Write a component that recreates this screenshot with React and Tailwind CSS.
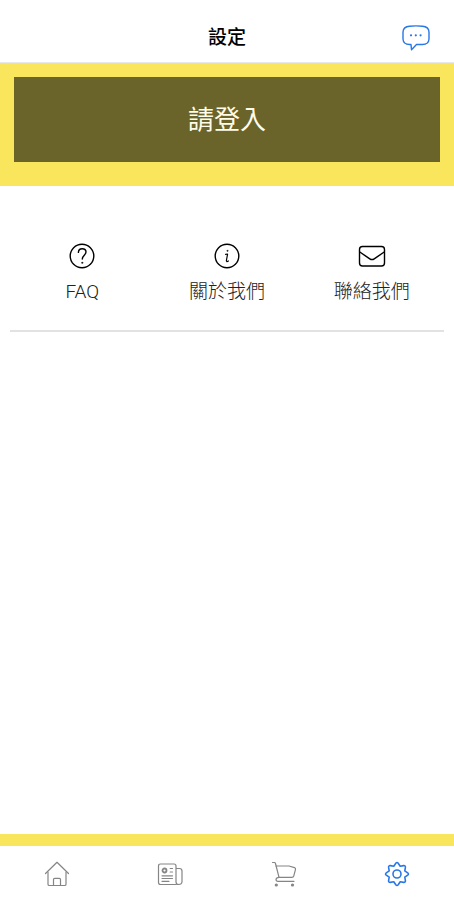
import React, { useState } from 'react';

const iconProps = {
  viewBox: '0 0 28 28',
  fill: 'none',
  stroke: 'currentColor',
  strokeLinecap: 'round',
  strokeLinejoin: 'round',
  'aria-hidden': true,
};

const ChatIcon = () => (
  <svg {...iconProps} className="w-7 h-7" strokeWidth="1.4">
    <path d="M9 20.5H7.5C3 20.5 1.2 18.5 1 15V8C1.2 4.3 3.5 2.5 7.5 2.2C12 1.8 16 1.8 20.5 2.2C24.5 2.5 26.8 4.3 27 8V15C26.8 18.5 24.5 20.5 20.5 20.5H14.5L9.5 25.8Z" />
    <path d="M9 11.3h.01M13.8 11.3h.01M18.6 11.3h.01" strokeWidth="2.2" />
  </svg>
);

const FaqIcon = () => (
  <svg {...iconProps} className="w-7 h-7" strokeWidth="1.4">
    <circle cx="14" cy="14" r="11.8" />
    <path d="M10.4 10.4C10.5 8 12.1 6.7 14.2 6.7C16.6 6.7 18 8.1 18 10.1C18 13.2 14.3 13.3 14.3 17" />
    <circle cx="14.2" cy="20.8" r=".7" fill="currentColor" strokeWidth=".4" />
  </svg>
);

const InfoIcon = () => (
  <svg {...iconProps} className="w-7 h-7" strokeWidth="1.4">
    <circle cx="14" cy="14" r="11.8" />
    <circle cx="14.4" cy="8.8" r=".6" fill="currentColor" strokeWidth=".4" />
    <path d="M12.6 12.4L14.6 12L13.4 18.5C13.2 19.8 14.2 19.8 15.4 19" strokeWidth="1.2" />
  </svg>
);

const MailIcon = () => (
  <svg {...iconProps} className="w-7 h-7" strokeWidth="1.4">
    <rect x="1.5" y="4.5" width="25" height="19.5" rx="3" />
    <path d="M1.8 10L11.8 16.8C13.3 17.8 14.7 17.8 16.2 16.8L26.2 10" />
  </svg>
);

const HomeIcon = () => (
  <svg {...iconProps} className="w-7 h-7" strokeWidth="1.2">
    <path d="M2.5 13.5L14 2.3L25.5 13.5" />
    <path d="M5 12V24.2Q5 25.5 6.3 25.5H21.7Q23 25.5 23 24.2V12" />
    <path d="M10.5 25.5V19.5Q10.5 18.3 11.7 18.3H16.3Q17.5 18.3 17.5 19.5V25.5" />
  </svg>
);

const NewsIcon = () => (
  <svg {...iconProps} className="w-7 h-7" strokeWidth="1.2">
    <path d="M20 24.5H4.5Q2.5 24.5 2.5 22.5V6Q2.5 4 4.5 4H18Q20 4 20 6V22Q20 24.5 22.8 24.5T26 22V11Q26 8.5 23.5 8.5H20" />
    <circle cx="8.5" cy="10.5" r="2" strokeWidth="1.8" />
    <path d="M14.2 8.5H16.5M14.2 12H16.5M6 15.8H16.5M6 18.5H16.5M6 21.3H13" />
  </svg>
);

const CartIcon = () => (
  <svg {...iconProps} className="w-7 h-7" strokeWidth="1.2">
    <path d="M2.5 2.5H4.3Q5.2 2.5 5.5 3.5L9 17.3" />
    <path d="M6 6H19L24.5 7.6Q25.8 8 25.5 9.3L23.8 15.8Q23.4 17.3 21.8 17.3H9Q6.3 17.3 6 19.5Q6 21.3 8 21.3H24" />
    <circle cx="6.3" cy="25" r="1" fill="currentColor" />
    <circle cx="22.5" cy="25" r="1" fill="currentColor" />
  </svg>
);

const GearIcon = () => (
  <svg {...iconProps} className="w-7 h-7" strokeWidth="1.6">
    <path d="M12.8 3.3Q14 1.8 15.2 3.3L17.2 6.2L20.6 5.6Q22.6 5.4 22.4 7.4L21.8 10.8L24.7 12.8Q26.2 14 24.7 15.2L21.8 17.2L22.4 20.6Q22.6 22.6 20.6 22.4L17.2 21.8L15.2 24.7Q14 26.2 12.8 24.7L10.8 21.8L7.4 22.4Q5.4 22.6 5.6 20.6L6.2 17.2L3.3 15.2Q1.8 14 3.3 12.8L6.2 10.8L5.6 7.4Q5.4 5.4 7.4 5.6L10.8 6.2Z" />
    <circle cx="14" cy="14" r="4" />
  </svg>
);

const links = [
  { id: 'faq', label: 'FAQ', Icon: FaqIcon },
  { id: 'about', label: '關於我們', Icon: InfoIcon },
  { id: 'contact', label: '聯絡我們', Icon: MailIcon },
];

const tabs = [
  { id: 'home', name: '首頁', Icon: HomeIcon },
  { id: 'news', name: '消息', Icon: NewsIcon },
  { id: 'cart', name: '購物車', Icon: CartIcon },
  { id: 'settings', name: '設定', Icon: GearIcon },
];

/**
 * Settings screen with the login banner, help links and bottom tab bar.
 */
export default function SettingsPage() {
  const [activeTab, setActiveTab] = useState('settings');

  return (
    <div className="min-h-screen flex flex-col bg-white text-black font-[Roboto,'Noto_Sans_CJK_TC',sans-serif]">
      {/* Header */}
      <header className="pt-6 pb-[10px] px-6 grid grid-cols-[1fr_auto_1fr] items-center border-b border-gray-200">
        <h1 className="col-start-2 text-[19px] leading-7 font-medium">設定</h1>
        <button type="button" aria-label="訊息" className="justify-self-end h-7 text-[#2878e8]">
          <ChatIcon />
        </button>
      </header>

      {/* Login banner */}
      <section className="bg-[#f9e65c] px-[14px] pt-[14px] pb-6">
        <button type="button" className="w-full h-[85px] bg-[#6a642a] text-[#fffbe8] text-[26px] leading-9">
          請登入
        </button>
      </section>

      <main className="flex-1 px-[10px] pt-7">
        <nav className="grid grid-cols-3 pt-7 pb-6 border-b-2 border-[#e2e2e2]">
          {links.map(({ id, label, Icon }) => (
            <a key={id} href={`#${id}`} className="flex flex-col items-center gap-2">
              <Icon />
              <span className="text-[19px] leading-7 font-light text-[#222222]">{label}</span>
            </a>
          ))}
        </nav>
      </main>

      {/* Bottom tab bar */}
      <footer className="border-t-12 border-[#f9e65c] bg-white">
        <nav className="h-[54px] pt-0.5 grid grid-cols-4 items-center">
          {tabs.map(({ id, name, Icon }) => (
            <button
              key={id}
              type="button"
              aria-label={name}
              onClick={() => setActiveTab(id)}
              className={`flex justify-center ${activeTab === id ? 'text-[#2878e8]' : 'text-[#858585]'}`}
            >
              <Icon />
            </button>
          ))}
        </nav>
      </footer>
    </div>
  );
}
